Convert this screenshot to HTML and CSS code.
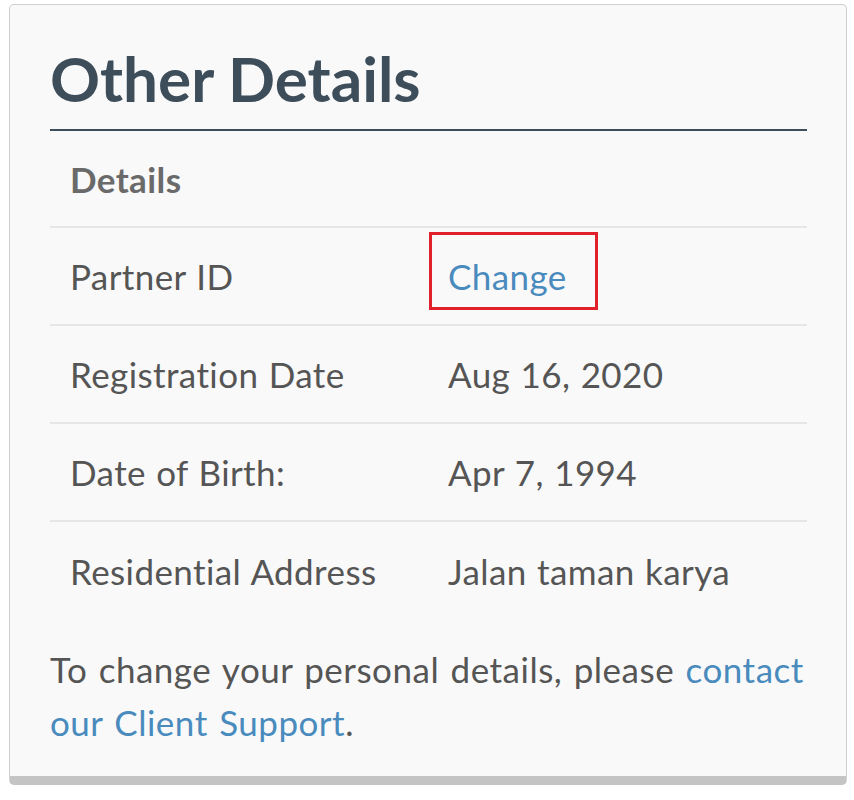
FILE: index.html
```html
<!DOCTYPE html>
<html>
<head>
<meta charset="utf-8">
<link rel="stylesheet" href="styles.css">
</head>
<body>
<div class="card">
  <h1 class="title">Other Details</h1>
  <table class="details">
    <thead>
      <tr><th colspan="2">Details</th></tr>
    </thead>
    <tbody>
      <tr><td class="label">Partner ID</td><td class="value"><div class="highlight"><a class="link" href="#">Change</a></div></td></tr>
      <tr><td class="label">Registration Date</td><td class="value">Aug 16, 2020</td></tr>
      <tr><td class="label">Date of Birth:</td><td class="value">Apr 7, 1994</td></tr>
      <tr><td class="label">Residential Address</td><td class="value">Jalan taman karya</td></tr>
    </tbody>
  </table>
  <p class="note">To change your personal details, please <a class="link" href="#">contact</a> <a class="link" href="#">our Client Support</a>.</p>
</div>
</body>
</html>
```
FILE: styles.css
```css
html, body {
  margin: 0;
  padding: 0;
  background: #ffffff;
}
body {
  min-height: 800px;
  box-sizing: border-box;
  padding: 4px 7px 0 9px;
  font-family: Lato, "Liberation Sans", sans-serif;
  color: #555555;
}
.card {
  background: #f9f9f9;
  border: 1px solid #cfcfcf;
  border-bottom: 9px solid #c4c4c4;
  border-radius: 5px;
  padding: 0 39px 0 40px;
  box-sizing: border-box;
  height: 781px;
}
.title {
  margin: 0;
  padding-top: 39px;
  padding-bottom: 17px;
  font-size: 62px;
  line-height: 68px;
  font-weight: 700;
  color: #3d4d5a;
  border-bottom: 2px solid #3d4d5a;
}
.details {
  width: 100%;
  border-collapse: collapse;
  font-size: 35px;
  letter-spacing: 0.4px;
  word-spacing: 1px;
}
.details th {
  text-align: left;
  font-weight: 700;
  color: #6a6a6a;
  height: 96px;
  padding: 0 20px;
  box-sizing: border-box;
  vertical-align: middle;
  line-height: 42px;
}
.details td {
  height: 98px;
  padding: 0 20px;
  box-sizing: border-box;
  vertical-align: middle;
  line-height: 42px;
  border-top: 2px solid #e6e6e6;
}
.details td.label {
  width: 378px;
}
.highlight {
  width: fit-content;
  border: 3px solid #e0202a;
  padding: 15px 28px 4px 16px;
  line-height: 53px;
  margin: 0 0 11px -19px;
}
.link {
  color: #4a8bbe;
  text-decoration: none;
}
.note {
  margin: 24px 0 0 0;
  font-size: 35px;
  line-height: 53px;
  letter-spacing: 0.5px;
  word-spacing: 2px;
  color: #555555;
}
```
